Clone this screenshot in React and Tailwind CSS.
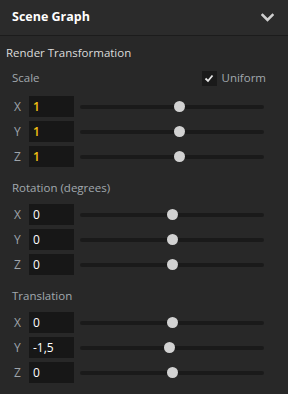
import { useState } from "react";

// ─────────────────────────────────────────
// Scene Graph — transformation panel
// ─────────────────────────────────────────
const sections = [
  {
    title: "Scale",
    accent: true,
    rows: [
      { axis: "X", value: "1", pos: 54.3 },
      { axis: "Y", value: "1", pos: 54.3 },
      { axis: "Z", value: "1", pos: 54.3 },
    ],
  },
  {
    title: "Rotation (degrees)",
    rows: [
      { axis: "X", value: "0", pos: 50 },
      { axis: "Y", value: "0", pos: 50 },
      { axis: "Z", value: "0", pos: 50 },
    ],
  },
  {
    title: "Translation",
    rows: [
      { axis: "X", value: "0", pos: 50 },
      { axis: "Y", value: "-1,5", pos: 48.9 },
      { axis: "Z", value: "0", pos: 50 },
    ],
  },
];

function Slider({ pos }) {
  return (
    <div className="relative flex-1 h-[4px] rounded-full bg-[#1a1a1a] ml-[6px]">
      <div
        className="absolute top-1/2 w-[11px] h-[11px] -ml-[5.5px] -mt-[5.5px] rounded-full bg-[#d2d2d2]"
        style={{ left: `${pos}%` }}
      />
    </div>
  );
}

function AxisRow({ axis, value, accent, pos }) {
  return (
    <div className="flex items-center h-[21px] pl-[14px] pr-[24px]">
      <span className="w-[15px] text-[12px] text-[#9ea4aa]">{axis}</span>
      <div className="w-[45px] h-[21px] bg-[#171717] flex items-center pl-[4px]">
        <span className={`text-[12px] ${accent ? "text-[#f5bf12] font-semibold" : "text-white"}`}>{value}</span>
      </div>
      <Slider pos={pos} />
    </div>
  );
}

export default function App() {
  const [uniform, setUniform] = useState(true);

  return (
    <div
      className="w-[288px] h-[394px] bg-[#282828] overflow-hidden"
      style={{ fontFamily: '"Open Sans", "Noto Sans", sans-serif' }}
    >
      {/* En-tête */}
      <div className="h-[36px] flex items-center justify-between pl-[12px] pr-[14px] bg-[#2b2b2b] border-b border-[#1c1c1c]">
        <h2 className="text-[12.5px] font-bold text-white">Scene Graph</h2>
        <svg width="13" height="9" viewBox="0 0 13 9" fill="none">
          <path d="M1.5 2 L6.5 7 L11.5 2" stroke="#cfcfcf" strokeWidth="2.6" strokeLinecap="square" />
        </svg>
      </div>

      <div className="pt-[8px]">
        <div className="h-[18px] leading-[18px] pl-[6px] text-[11.5px] text-[#dcdcdc]">Render Transformation</div>

        {sections.map((s, i) => (
          <div key={i}>
            {i === 0 ? (
              <div className="mt-[6px] h-[20px] flex items-center justify-between pl-[12px] pr-[22px]">
                <span className="text-[11.5px] text-[#a2a8ae]">{s.title}</span>
                <button
                  className="flex items-center gap-[5px]"
                  onClick={() => setUniform(!uniform)}
                >
                  <span className="w-[15px] h-[15px] bg-[#1a1a1a] flex items-center justify-center">
                    {uniform && (
                      <svg width="10" height="9" viewBox="0 0 10 9" fill="none">
                        <path d="M1.5 4.5 L4 7 L8.5 1.5" stroke="#e6e6e6" strokeWidth="1.8" />
                      </svg>
                    )}
                  </span>
                  <span className="text-[11.5px] text-[#a2a8ae]">Uniform</span>
                </button>
              </div>
            ) : (
              <div className="mt-[12px] h-[18px] leading-[18px] pl-[12px] text-[11.5px] text-[#a2a8ae]">{s.title}</div>
            )}

            <div className={`flex flex-col gap-[4px] ${i === 0 ? "mt-[8px]" : "mt-[7px]"}`}>
              {s.rows.map((r) => (
                <AxisRow key={r.axis} {...r} accent={s.accent} />
              ))}
            </div>
          </div>
        ))}
      </div>
    </div>
  );
}
